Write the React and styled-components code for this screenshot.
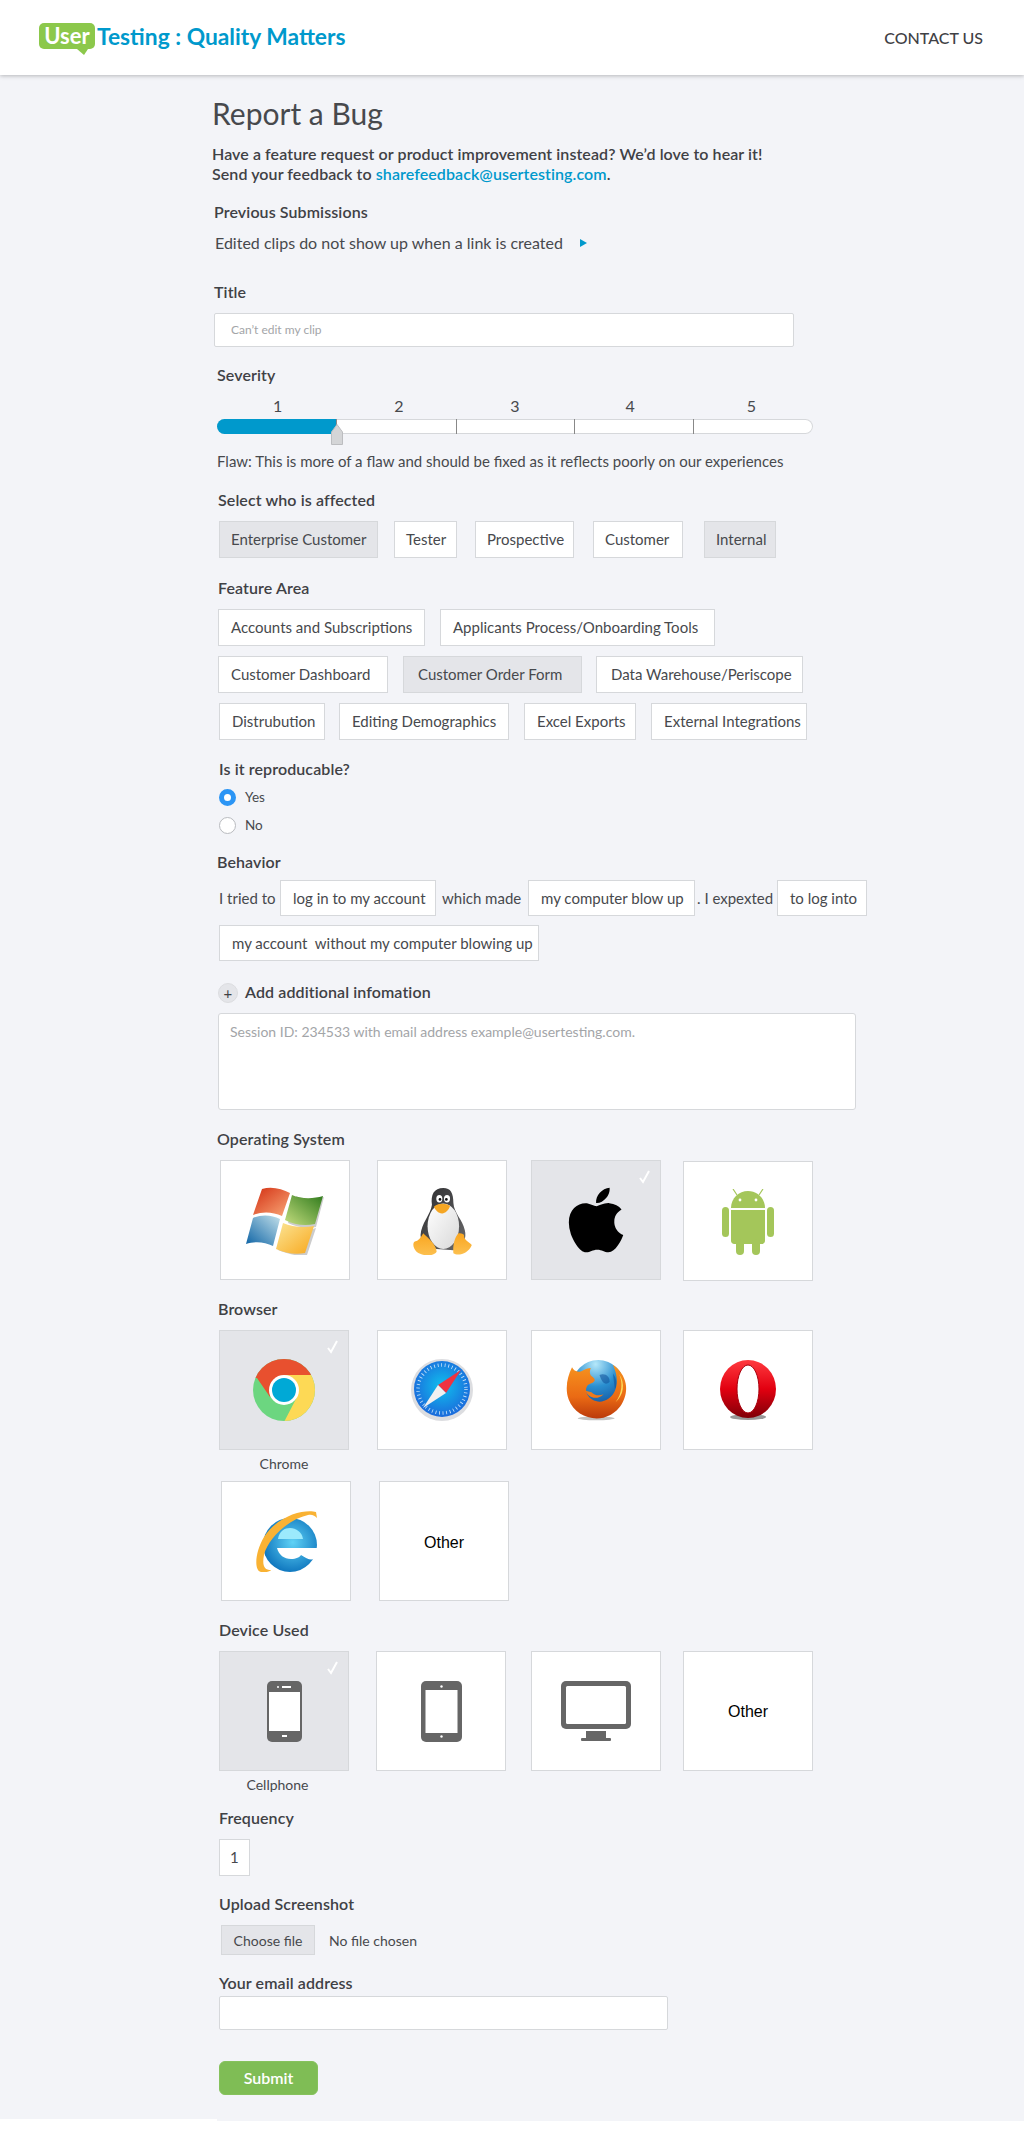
import styled, { createGlobalStyle } from "styled-components";
import { FaApple } from "react-icons/fa";

const colors = {
  page: "#f3f4f8",
  border: "#d6d8db",
  selected: "#e4e5e9",
  text: "#47494d",
  label: "#3f4145",
  blue: "#0099cc",
  green: "#7fbd55",
};

const GlobalStyle = createGlobalStyle`
  * { box-sizing: border-box; }
  body {
    margin: 0;
    background: #fff;
    font-family: Lato, "Open Sans", sans-serif;
    color: ${colors.text};
  }
`;

const Header = styled.header`
  height: 75px;
  background: #fff;
  box-shadow: 0 1px 4px rgba(0, 0, 0, 0.25);
  display: flex;
  align-items: center;
  justify-content: space-between;
  padding: 0 41px 0 39px;
  position: relative;
`;
const Logo = styled.div`
  display: flex;
  align-items: center;
  gap: 2px;
  margin-top: -3px;
  font-size: 22.8px;
  font-weight: 700;
  color: ${colors.blue};
`;
const LogoBubble = styled.span`
  position: relative;
  width: 56px;
  height: 26px;
  border-radius: 5px;
  background: #8cc84b;
  color: #fff;
  font-size: 22px;
  text-align: center;
  line-height: 26px;
  &::after {
    content: "";
    position: absolute;
    left: 38px;
    top: 26px;
    border-top: 6px solid #8cc84b;
    border-left: 7px solid transparent;
    border-right: 4px solid transparent;
  }
`;
const ContactLink = styled.a`
  font-size: 16px;
  font-weight: 500;
  color: ${colors.label};
`;

const Page = styled.main`
  background: ${colors.page};
  padding: 20px 0 24px 212px;
`;
const PageEnd = styled.div`
  height: 2px;
  margin-left: 217px;
  background: ${colors.page};
`;
const PageTitle = styled.h1`
  margin: 0;
  font-size: 30px;
  font-weight: 400;
  line-height: 36px;
  color: #47494d;
`;
const Intro = styled.p`
  margin: 13px 0 0;
  font-size: 16px;
  font-weight: 600;
  line-height: 20px;
  letter-spacing: 0.08px;
  color: ${colors.label};
  a { color: ${colors.blue}; text-decoration: none; }
`;
const Label = styled.div`
  margin: ${(p) => p.$top}px 0 0 ${(p) => p.$left}px;
  height: 20px;
  font-size: 16px;
  font-weight: 600;
  line-height: 18px;
  letter-spacing: 0.1px;
  color: ${colors.label};
`;
const PrevRow = styled.div`
  margin: 10px 0 0 3px;
  height: 20px;
  display: flex;
  align-items: center;
  gap: 17px;
  font-size: 16px;
  line-height: 20px;
`;
const Arrow = styled.span`
  border-left: 7px solid ${colors.blue};
  border-top: 4px solid transparent;
  border-bottom: 4px solid transparent;
`;
const TextInput = styled.input`
  display: block;
  margin: ${(p) => p.$top}px 0 0 ${(p) => p.$left}px;
  width: ${(p) => p.$width}px;
  height: 34px;
  padding: 0 16px 2px;
  background: #fff;
  border: 1px solid ${colors.border};
  border-radius: 2px;
  font: 12px Lato, sans-serif;
  &::placeholder { color: #a3a5a8; }
`;

const Slider = styled.div`
  position: relative;
  margin: 10px 0 0 5px;
  width: 596px;
`;
const Scale = styled.div`
  display: flex;
`;
const ScaleNumber = styled.div`
  width: ${(p) => p.$width}px;
  height: 20px;
  text-align: center;
  font-size: 16px;
  line-height: 20px;
`;
const Track = styled.div`
  display: flex;
  margin-top: 3px;
  height: 15px;
  background: #fff;
  border-radius: 8px;
  box-shadow: inset 0 0 0 1px ${colors.border};
  overflow: hidden;
`;
const Segment = styled.div`
  width: ${(p) => p.$width}px;
  background: ${(p) => (p.$filled ? colors.blue : "transparent")};
  border-right: 1px solid #888;
  &:last-child { border-right: 0; }
`;
const Handle = styled.svg`
  position: absolute;
  left: 114px;
  top: 28px;
`;
const Hint = styled.div`
  margin: 18px 0 0 5px;
  height: 20px;
  font-size: 15px;
  line-height: 18px;
`;

const ChipRow = styled.div`
  display: flex;
  margin-top: ${(p) => p.$top}px;
`;
const Chip = styled.div`
  margin-left: ${(p) => p.$left}px;
  width: ${(p) => p.$width}px;
  height: 37px;
  display: flex;
  align-items: center;
  padding: 0 0 1px ${(p) => p.$pad || 12}px;
  background: ${(p) => (p.$selected ? colors.selected : "#fff")};
  border: 1px solid ${colors.border};
  font-size: 15px;
  white-space: pre;
`;
const RadioGroup = styled.div`
  margin: 7px 0 0 7px;
  display: flex;
  flex-direction: column;
  gap: 8px;
`;
const RadioRow = styled.div`
  height: 20px;
  display: flex;
  align-items: center;
  gap: 9px;
  font-size: 13.5px;
`;
const Radio = styled.span`
  width: 17px;
  height: 17px;
  border-radius: 50%;
  background: #fff;
  border: ${(p) => (p.$checked ? `5px solid #2b95f5` : `1px solid #b9bbbf`)};
`;
const SentenceRow = styled.div`
  margin-top: ${(p) => p.$top}px;
  display: flex;
  align-items: center;
  font-size: 15px;
`;
const Word = styled.span`
  margin-left: ${(p) => p.$left}px;
  width: ${(p) => p.$width}px;
  white-space: nowrap;
`;
const Blank = styled(Chip)`
  height: 36px;
`;
const AddRow = styled.div`
  margin: 22px 0 0 6px;
  height: 20px;
  display: flex;
  align-items: center;
  gap: 7px;
  font-size: 16px;
  font-weight: 600;
  letter-spacing: 0.1px;
  line-height: 18px;
  color: ${colors.label};
`;
const PlusCircle = styled.span`
  width: 20px;
  height: 20px;
  border-radius: 50%;
  background: ${colors.selected};
  border: 1px solid #dcdde0;
  display: flex;
  align-items: center;
  justify-content: center;
  font-weight: 400;
  font-size: 15px;
`;
const AddText = styled.span`
  margin-top: -2px;
`;
const Notes = styled.textarea`
  display: block;
  margin: 10px 0 0 6px;
  width: 638px;
  height: 97px;
  padding: 9px 11px;
  background: #fff;
  border: 1px solid ${colors.border};
  border-radius: 3px;
  resize: none;
  font: 14px Lato, sans-serif;
  &::placeholder { color: #a3a5a8; }
`;

const TileRow = styled.div`
  display: flex;
  align-items: flex-start;
  margin-top: ${(p) => p.$top}px;
`;
const TileColumn = styled.div`
  margin-left: ${(p) => p.$left}px;
  width: 130px;
`;
const Tile = styled.div`
  position: relative;
  margin-top: ${(p) => p.$drop || 0}px;
  width: 130px;
  height: 120px;
  display: flex;
  align-items: center;
  justify-content: center;
  background: ${(p) => (p.$selected ? colors.selected : "#fff")};
  border: 1px solid ${colors.border};
  font: 16px "Liberation Sans", Arial, sans-serif;
  color: #000;
`;
const Check = styled.svg`
  position: absolute;
  top: 9px;
  right: 10px;
`;
const Caption = styled.div`
  height: 20px;
  margin-top: 4px;
  margin-left: ${(p) => p.$shift || 0}px;
  text-align: center;
  font-size: 14px;
  line-height: 20px;
`;
const IconShift = styled.span`
  display: flex;
  margin-top: ${(p) => p.$top || 0}px;
`;
const FileRow = styled.div`
  margin: 10px 0 0 9px;
  height: 30px;
  display: flex;
  align-items: center;
  gap: 14px;
  font-size: 14px;
`;
const FileButton = styled.button`
  width: 94px;
  height: 30px;
  padding: 0;
  background: ${colors.selected};
  border: 1px solid ${colors.border};
  color: ${colors.text};
  font: 14px Lato, sans-serif;
`;
const SubmitButton = styled.button`
  display: block;
  margin: 31px 0 0 7px;
  width: 99px;
  height: 34px;
  padding: 0 0 2px;
  background: ${colors.green};
  border: 1px solid #86c25c;
  border-radius: 6px;
  color: #fff;
  font: 600 16px Lato, sans-serif;
`;

const WindowsIcon = () => (
  <svg width="78" height="68" viewBox="0 0 78 68">
    <defs>
      <linearGradient id="winRed" x1="0" y1="0" x2="1" y2="1"><stop offset="0" stopColor="#d32f12" /><stop offset="1" stopColor="#f9a878" /></linearGradient>
      <linearGradient id="winGreen" x1="1" y1="0" x2="0" y2="1"><stop offset="0" stopColor="#2f7a1c" /><stop offset="1" stopColor="#c4dd7e" /></linearGradient>
      <linearGradient id="winBlue" x1="0" y1="1" x2="1" y2="0"><stop offset="0" stopColor="#0b62a4" /><stop offset="1" stopColor="#c3e0ea" /></linearGradient>
      <linearGradient id="winYellow" x1="1" y1="1" x2="0" y2="0"><stop offset="0" stopColor="#f8a81d" /><stop offset="1" stopColor="#fbe596" /></linearGradient>
    </defs>
    <path d="M50 9C58 13 70 13 78 10L70 40C62 42 50 40 42 36ZM40 38C48 42 60 44 70 41L61 68C50 70 40 66 32 63Z" fill="#ccc" />
    <path d="M16 2C26 -1 36 2 44 6L36 29C27 25 17 24 7 28Z" fill="url(#winRed)" />
    <path d="M46 8C55 12 67 12 77 9L69 37C59 39 48 38 39 33Z" fill="url(#winGreen)" />
    <path d="M7 31C16 27 26 28 34 32L27 59C19 55 9 54 0 57Z" fill="url(#winBlue)" />
    <path d="M37 36C46 40 58 41 68 39L59 66C49 68 39 66 30 62Z" fill="url(#winYellow)" />
  </svg>
);

const TuxIcon = () => (
  <svg width="59" height="67" viewBox="0 0 175 200">
    <defs>
      <linearGradient id="tuxBody" x1="0" y1="0" x2="1" y2="1"><stop offset="0" stopColor="#2c2c2e" /><stop offset="1" stopColor="#6a6a6c" /></linearGradient>
      <linearGradient id="tuxBelly" x1="0" y1="0" x2="1" y2="1"><stop offset="0" stopColor="#fff" /><stop offset="1" stopColor="#d9d9d9" /></linearGradient>
      <linearGradient id="tuxFoot" x1="0" y1="0" x2="0" y2="1"><stop offset="0" stopColor="#f9a51f" /><stop offset="1" stopColor="#fcc04f" /></linearGradient>
    </defs>
    <path d="M90 0C62 0 52 20 56 50C52 80 24 105 22 140C22 160 40 175 70 182L120 186C152 172 160 150 154 125C147 95 122 75 120 45C120 15 112 0 90 0Z" fill="url(#tuxBody)" />
    <ellipse cx="90" cy="114" rx="47" ry="68" fill="url(#tuxBelly)" />
    <ellipse cx="78" cy="32" rx="9" ry="11" fill="#fff" />
    <ellipse cx="101" cy="32" rx="9" ry="11" fill="#fff" />
    <circle cx="80" cy="34" r="4" fill="#111" />
    <circle cx="99" cy="34" r="4" fill="#111" />
    <path d="M62 56C72 45 98 44 110 54C106 67 94 77 86 76C75 76 66 66 62 56Z" fill="#f5a623" />
    <path d="M30 135C45 150 70 170 70 190C60 205 30 205 10 190C0 180 -3 165 5 160C15 158 22 150 30 135Z" fill="url(#tuxFoot)" />
    <path d="M135 135C122 150 118 175 120 195C135 205 165 195 175 170C165 160 150 155 152 140C148 135 140 135 135 135Z" fill="url(#tuxFoot)" />
  </svg>
);

const AndroidIcon = () => (
  <svg width="52" height="66" viewBox="0 0 52 66" fill="#a4c65a">
    <path d="M15 6L11 0M37 6L41 0" stroke="#a4c65a" strokeWidth="1.2" />
    <path d="M9 19C9 9 17 2 26 2C35 2 43 9 43 19Z" />
    <circle cx="18" cy="11" r="1.4" fill="#fff" />
    <circle cx="34" cy="11" r="1.4" fill="#fff" />
    <path d="M9 21H43V52C43 54 41 55 40 55H12C11 55 9 54 9 52Z" />
    <rect x="0" y="18" width="7" height="30" rx="3.5" />
    <rect x="45" y="18" width="7" height="30" rx="3.5" />
    <rect x="14" y="50" width="8" height="16" rx="4" />
    <rect x="30" y="50" width="8" height="16" rx="4" />
  </svg>
);

const ChromeIcon = () => (
  <svg width="62" height="62" viewBox="0 0 62 62">
    <defs><clipPath id="chromeClip"><circle cx="31" cy="31" r="31" /></clipPath></defs>
    <g clipPath="url(#chromeClip)">
      <rect width="62" height="62" fill="#6cd680" />
      <polygon points="31,16 65,16 65,65 30,65 44,38" fill="#fdd955" />
      <polygon points="-2,-2 65,-2 65,16 31,16 17,38 4,19 -2,19" fill="#e8502f" />
    </g>
    <circle cx="31" cy="31" r="15" fill="#fff" />
    <circle cx="31" cy="31" r="12" fill="#00a9d6" />
  </svg>
);

const SafariIcon = () => (
  <svg width="64" height="62" viewBox="0 0 64 62">
    <defs>
      <radialGradient id="safariFace" cx="0.5" cy="0.45" r="0.55"><stop offset="0" stopColor="#10c0ee" /><stop offset="1" stopColor="#1b6adb" /></radialGradient>
    </defs>
    <circle cx="32" cy="31" r="31" fill="#dcdde0" />
    <circle cx="32" cy="30" r="28" fill="url(#safariFace)" />
    <circle cx="32" cy="30" r="24" fill="none" stroke="#cfe6fa" strokeWidth="3.5" strokeDasharray="0.8 2.8" />
    <polygon points="51,11 36,34 28,26" fill="#ee3340" />
    <polygon points="13,49 28,26 36,34" fill="#f0f0f0" />
  </svg>
);

const FirefoxIcon = () => (
  <svg width="61" height="61" viewBox="0 0 182 182">
    <defs>
      <radialGradient id="foxGlobe" cx="0.45" cy="0.08" r="0.95"><stop offset="0" stopColor="#b5e8fa" /><stop offset="0.45" stopColor="#2a8fd0" /><stop offset="1" stopColor="#0b3f8e" /></radialGradient>
      <linearGradient id="foxTail" x1="0" y1="0" x2="0" y2="1"><stop offset="0" stopColor="#f7941f" /><stop offset="0.6" stopColor="#ea6a14" /><stop offset="1" stopColor="#bb3a0b" /></linearGradient>
    </defs>
    <ellipse cx="90" cy="174" rx="55" ry="6" fill="#c4c4c4" />
    <circle cx="96" cy="78" r="78" fill="url(#foxGlobe)" />
    <path d="M100 45C115 38 132 48 130 66C118 76 108 70 100 45ZM140 40C152 55 154 75 146 88Z" fill="#0e4e98" opacity="0.55" />
    <path d="M18 22C4 50 -4 85 8 118C24 160 70 182 112 172C160 160 186 112 178 70C174 48 160 28 140 14C152 42 156 66 146 92C132 122 102 132 78 118C62 108 56 92 62 80C68 70 76 72 82 66C90 60 84 54 76 48C70 42 70 32 74 24C60 24 50 34 40 35C30 36 22 30 18 22Z" fill="url(#foxTail)" />
    <path d="M58 92C66 112 92 122 112 102C100 108 84 106 76 96Z" fill="#ee7a1a" />
    <path d="M158 42C170 65 168 100 148 126C172 105 178 70 158 42Z" fill="#fbdc5a" />
  </svg>
);

const OperaIcon = () => (
  <svg width="56" height="60" viewBox="0 0 56 60">
    <defs>
      <linearGradient id="operaRed" x1="0" y1="0" x2="0" y2="1"><stop offset="0" stopColor="#ff3a3f" /><stop offset="0.5" stopColor="#e20010" /><stop offset="1" stopColor="#7f0008" /></linearGradient>
    </defs>
    <ellipse cx="28" cy="57" rx="18" ry="3" fill="#999" />
    <ellipse cx="28" cy="29" rx="28" ry="29" fill="url(#operaRed)" />
    <ellipse cx="28" cy="29" rx="11" ry="24" fill="#fff" stroke="#a8000c" strokeWidth="1" />
  </svg>
);

const IeIcon = () => (
  <svg width="61" height="62" viewBox="0 0 61 62">
    <defs>
      <radialGradient id="ieBlue" cx="0.55" cy="0.45" r="0.6"><stop offset="0" stopColor="#5fd2f6" /><stop offset="1" stopColor="#0a71bb" /></radialGradient>
    </defs>
    <circle cx="34" cy="35" r="27" fill="url(#ieBlue)" />
    <path d="M22 29C23 21 29 18 34 18C40 18 46 22 47 29Z" fill="#9ceafc" />
    <path d="M21 38H61V45C57 53 52 49 45 45C44 47 40 49 35 49C28 49 23 45 21 38Z" fill="#fff" />
    <path d="M60 2C50 -1 23 4 8 27C0 40 -3 60 5 62C10 63 15 61 15 60C8 60 6 55 8 45C12 28 33 9 52 5C56 4 59 6 61 8Z" fill="#f9b233" />
  </svg>
);

const PhoneIcon = () => (
  <svg width="35" height="61" viewBox="0 0 35 61">
    <rect width="35" height="61" rx="5" fill="#666" />
    <rect x="2" y="11" width="31" height="39" fill="#fff" />
    <rect x="15" y="5" width="9" height="2" fill="#fff" />
    <circle cx="11" cy="6" r="1" fill="#fff" />
    <rect x="15" y="54" width="5" height="2" fill="#fff" />
  </svg>
);

const TabletIcon = () => (
  <svg width="41" height="61" viewBox="0 0 41 61">
    <rect width="41" height="61" rx="5" fill="#666" />
    <rect x="4.5" y="9" width="32" height="43" fill="#fff" />
    <circle cx="20.5" cy="5.5" r="1.2" fill="#fff" />
    <circle cx="20.5" cy="55.5" r="1.2" fill="#fff" />
  </svg>
);

const MonitorIcon = () => (
  <svg width="70" height="60" viewBox="0 0 70 60">
    <rect width="70" height="48" rx="5" fill="#666" />
    <rect x="5" y="5" width="60" height="38" rx="1.5" fill="#fff" />
    <rect x="25" y="50" width="20" height="8" fill="#666" />
    <rect x="20" y="57" width="30" height="3" rx="1" fill="#666" />
  </svg>
);

const CheckMark = () => (
  <Check width="11" height="14" viewBox="0 0 11 14">
    <path d="M1 8L4 12L10 1" fill="none" stroke="#fff" strokeWidth="2" />
  </Check>
);

const trackWidths = [120, 120, 118, 119, 119];
const numberWidths = [122, 122, 112, 120, 124];

const affected = [
  { label: "Enterprise Customer", left: 7, width: 159, selected: true, pad: 11 },
  { label: "Tester", left: 16, width: 63, pad: 11 },
  { label: "Prospective", left: 18, width: 99, pad: 11 },
  { label: "Customer", left: 19, width: 90, pad: 11 },
  { label: "Internal", left: 21, width: 72, selected: true, pad: 11 },
];
const featureRows = [
  [
    { label: "Accounts and Subscriptions", left: 6, width: 207 },
    { label: "Applicants Process/Onboarding Tools", left: 15, width: 275 },
  ],
  [
    { label: "Customer Dashboard", left: 6, width: 170 },
    { label: "Customer Order Form", left: 15, width: 179, selected: true, pad: 14 },
    { label: "Data Warehouse/Periscope", left: 14, width: 207, pad: 14 },
  ],
  [
    { label: "Distrubution", left: 7, width: 106 },
    { label: "Editing Demographics", left: 14, width: 170 },
    { label: "Excel Exports", left: 15, width: 112 },
    { label: "External Integrations", left: 15, width: 156 },
  ],
];

function App() {
  return (
    <>
      <GlobalStyle />
      <Header>
        <Logo>
          <LogoBubble>User</LogoBubble>
          <span>Testing : Quality Matters</span>
        </Logo>
        <ContactLink>CONTACT US</ContactLink>
      </Header>
      <Page>
        <PageTitle>Report a Bug</PageTitle>
        <Intro>
          Have a feature request or product improvement instead? We’d love to hear it!
          <br />
          Send your feedback to <a href="#feedback">sharefeedback@usertesting.com</a>.
        </Intro>
        <Label $top={19} $left={2}>Previous Submissions</Label>
        <PrevRow>
          Edited clips do not show up when a link is created
          <Arrow />
        </PrevRow>
        <Label $top={30} $left={2}>Title</Label>
        <TextInput $top={10} $left={2} $width={580} placeholder="Can’t edit my clip" />

        <Label $top={19} $left={5}>Severity</Label>
        <Slider>
          <Scale>
            {numberWidths.map((w, i) => (
              <ScaleNumber key={i} $width={w}>{i + 1}</ScaleNumber>
            ))}
          </Scale>
          <Track>
            {trackWidths.map((w, i) => (
              <Segment key={i} $width={w} $filled={i === 0} />
            ))}
          </Track>
          <Handle width="12" height="21" viewBox="0 0 12 21">
            <path d="M6 0.5L11.5 8V20.5H0.5V8Z" fill="#d4d5d7" stroke="#bcbdc0" />
          </Handle>
        </Slider>
        <Hint>Flaw: This is more of a flaw and should be fixed as it reflects poorly on our experiences</Hint>

        <Label $top={19} $left={6}>Select who is affected</Label>
        <ChipRow $top={10}>
          {affected.map((c) => (
            <Chip key={c.label} $left={c.left} $width={c.width} $selected={c.selected} $pad={c.pad}>{c.label}</Chip>
          ))}
        </ChipRow>

        <Label $top={21} $left={6}>Feature Area</Label>
        {featureRows.map((row, i) => (
          <ChipRow key={i} $top={10}>
            {row.map((c) => (
              <Chip key={c.label} $left={c.left} $width={c.width} $selected={c.selected} $pad={c.pad}>{c.label}</Chip>
            ))}
          </ChipRow>
        ))}

        <Label $top={20} $left={7}>Is it reproducable?</Label>
        <RadioGroup>
          <RadioRow><Radio $checked />Yes</RadioRow>
          <RadioRow><Radio />No</RadioRow>
        </RadioGroup>

        <Label $top={18} $left={5}>Behavior</Label>
        <SentenceRow $top={7}>
          <Word $left={7} $width={61}>I tried to</Word>
          <Blank $left={0} $width={156}>log in to my account</Blank>
          <Word $left={6} $width={80}>which made</Word>
          <Blank $left={6} $width={167}>my computer blow up</Blank>
          <Word $left={2} $width={78}>. I expexted</Word>
          <Blank $left={2} $width={90}>to log into</Blank>
        </SentenceRow>
        <SentenceRow $top={9}>
          <Blank $left={7} $width={320}>my account  without my computer blowing up</Blank>
        </SentenceRow>

        <AddRow><PlusCircle>+</PlusCircle><AddText>Add additional infomation</AddText></AddRow>
        <Notes placeholder="Session ID: 234533 with email address example@usertesting.com." />

        <Label $top={20} $left={5}>Operating System</Label>
        <TileRow $top={10}>
          <TileColumn $left={8}><Tile><IconShift $top={2}><WindowsIcon /></IconShift></Tile></TileColumn>
          <TileColumn $left={27}><Tile><IconShift $top={3}><TuxIcon /></IconShift></Tile></TileColumn>
          <TileColumn $left={24}><Tile $selected><CheckMark /><FaApple size={74} color="#000" /></Tile></TileColumn>
          <TileColumn $left={22}><Tile $drop={1}><IconShift $top={2}><AndroidIcon /></IconShift></Tile></TileColumn>
        </TileRow>

        <Label $top={19} $left={6}>Browser</Label>
        <TileRow $top={10}>
          <TileColumn $left={7}>
            <Tile $selected><CheckMark /><ChromeIcon /></Tile>
            <Caption>Chrome</Caption>
          </TileColumn>
          <TileColumn $left={28}><Tile><SafariIcon /></Tile></TileColumn>
          <TileColumn $left={24}><Tile><FirefoxIcon /></Tile></TileColumn>
          <TileColumn $left={22}><Tile><OperaIcon /></Tile></TileColumn>
        </TileRow>
        <TileRow $top={7}>
          <TileColumn $left={9}><Tile><IeIcon /></Tile></TileColumn>
          <TileColumn $left={28}><Tile><IconShift $top={3}>Other</IconShift></Tile></TileColumn>
        </TileRow>

        <Label $top={20} $left={7}>Device Used</Label>
        <TileRow $top={10}>
          <TileColumn $left={7}>
            <Tile $selected><CheckMark /><PhoneIcon /></Tile>
            <Caption $shift={-13}>Cellphone</Caption>
          </TileColumn>
          <TileColumn $left={27}><Tile><TabletIcon /></Tile></TileColumn>
          <TileColumn $left={25}><Tile><MonitorIcon /></Tile></TileColumn>
          <TileColumn $left={22}><Tile><IconShift $top={2}>Other</IconShift></Tile></TileColumn>
        </TileRow>

        <Label $top={14} $left={7}>Frequency</Label>
        <ChipRow $top={10}>
          <Chip $left={7} $width={31} $pad={10}>1</Chip>
        </ChipRow>
        <Label $top={19} $left={7}>Upload Screenshot</Label>
        <FileRow>
          <FileButton>Choose file</FileButton>
          No file chosen
        </FileRow>
        <Label $top={19} $left={7}>Your email address</Label>
        <TextInput $top={2} $left={7} $width={449} />
        <SubmitButton>Submit</SubmitButton>
      </Page>
      <PageEnd />
    </>
  );
}

export default App;
